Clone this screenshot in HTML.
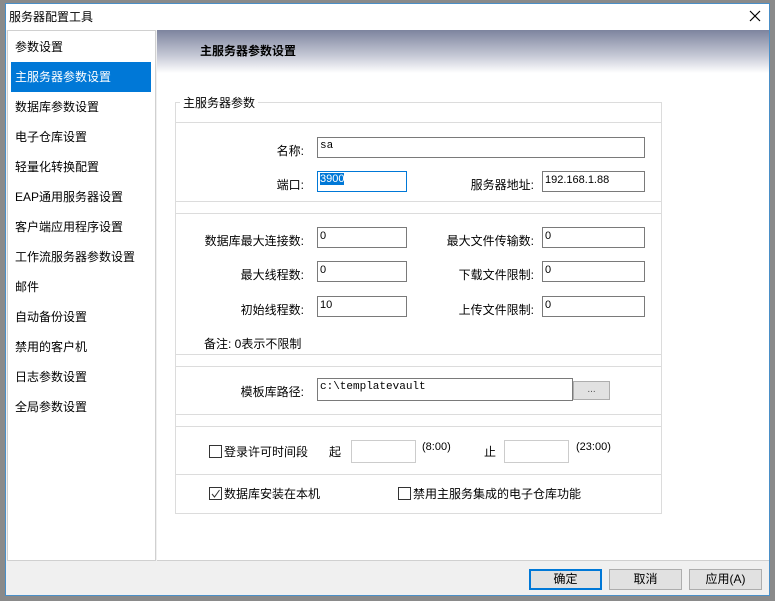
<!DOCTYPE html>
<html><head><meta charset="utf-8"><style>
*{margin:0;padding:0;box-sizing:border-box}
body{width:775px;height:601px;background:#8a8a8a;position:relative;overflow:hidden;font-family:"Liberation Sans","Microsoft YaHei","Noto Sans CJK SC",sans-serif;font-size:12px;color:#000}
.a{position:absolute}
.win{left:5px;top:3px;width:765px;height:593px;background:#f0f0f0;border:1px solid #4a8fc7}
.inp{position:absolute;background:#fff;border:1px solid #7a7a7a;height:22px;font-family:"Liberation Mono",monospace;font-size:11px;padding:2px 2px}
.lbl{position:absolute;text-align:right;font-size:12px}
.hl{position:absolute;height:1px;background:#dcdcdc}
.btn{position:absolute;height:21px;background:#e1e1e1;border:1px solid #adadad;text-align:center;line-height:19px;font-size:12px}
.cb{display:inline-block;width:13px;height:13px;border:1px solid #333;background:#fff;vertical-align:-2px;margin-right:2px;position:relative}
.li{position:absolute;left:15px;font-size:12px}
</style></head><body>
<div class="a win"></div>
<div class="a" style="left:6px;top:4px;width:763px;height:26px;background:#fff"></div>
<div class="a" style="left:9px;top:8px;font-size:12px">服务器配置工具</div>
<svg class="a" style="left:749px;top:10px" width="12" height="12"><path d="M1 1L11 11M11 1L1 11" stroke="#000" stroke-width="1.2"/></svg>
<div class="a" style="left:7px;top:30px;width:149px;height:531px;background:#fff;border:1px solid #d0d0d0"></div>
<div class="a" style="left:11px;top:62px;width:140px;height:30px;background:#0078d7"></div>
<div class="li" style="top:38px">参数设置</div>
<div class="li" style="top:68px;color:#fff">主服务器参数设置</div>
<div class="li" style="top:98px">数据库参数设置</div>
<div class="li" style="top:128px">电子仓库设置</div>
<div class="li" style="top:158px">轻量化转换配置</div>
<div class="li" style="top:188px">EAP通用服务器设置</div>
<div class="li" style="top:218px">客户端应用程序设置</div>
<div class="li" style="top:248px">工作流服务器参数设置</div>
<div class="li" style="top:278px">邮件</div>
<div class="li" style="top:308px">自动备份设置</div>
<div class="li" style="top:338px">禁用的客户机</div>
<div class="li" style="top:368px">日志参数设置</div>
<div class="li" style="top:398px">全局参数设置</div>
<div class="a" style="left:157px;top:30px;width:612px;height:531px;background:#fff;border-bottom:1px solid #d0d0d0"></div>
<div class="a" style="left:157px;top:30px;width:612px;height:43px;background:linear-gradient(#7d849e,#c6c9d6 60%,#fff)"></div>
<div class="a" style="left:200px;top:42px;font-weight:bold;font-size:12px">主服务器参数设置</div>
<div class="a" style="left:175px;top:102px;width:487px;height:412px;border:1px solid #dcdcdc"></div>
<div class="a" style="left:180px;top:94px;background:#fff;padding:0 3px">主服务器参数</div>
<div class="hl" style="left:176px;top:122px;width:485px"></div>
<div class="hl" style="left:176px;top:201px;width:485px"></div>
<div class="hl" style="left:176px;top:213px;width:485px"></div>
<div class="hl" style="left:176px;top:354px;width:485px"></div>
<div class="hl" style="left:176px;top:366px;width:485px"></div>
<div class="hl" style="left:176px;top:414px;width:485px"></div>
<div class="hl" style="left:176px;top:426px;width:485px"></div>
<div class="hl" style="left:176px;top:474px;width:485px"></div>
<div class="lbl" style="left:200px;width:104px;top:142px">名称:</div>
<div class="inp" style="left:317px;top:137px;width:328px;height:21px">sa</div>
<div class="lbl" style="left:200px;width:104px;top:176px">端口:</div>
<div class="inp" style="left:317px;top:171px;width:90px;height:21px;border-color:#0078d7;font-family:'Liberation Sans';padding:1px 2px"><span style="background:#0078d7;color:#fff">3900</span></div>
<div class="lbl" style="left:420px;width:114px;top:176px">服务器地址:</div>
<div class="inp" style="left:542px;top:171px;width:103px;height:21px;font-family:'Liberation Sans'">192.168.1.88</div>
<div class="lbl" style="left:190px;width:114px;top:232px">数据库最大连接数:</div>
<div class="inp" style="left:317px;top:227px;width:90px;height:21px;font-family:'Liberation Sans'">0</div>
<div class="lbl" style="left:410px;width:124px;top:232px">最大文件传输数:</div>
<div class="inp" style="left:542px;top:227px;width:103px;height:21px;font-family:'Liberation Sans'">0</div>
<div class="lbl" style="left:200px;width:104px;top:266px">最大线程数:</div>
<div class="inp" style="left:317px;top:261px;width:90px;height:21px;font-family:'Liberation Sans'">0</div>
<div class="lbl" style="left:420px;width:114px;top:266px">下载文件限制:</div>
<div class="inp" style="left:542px;top:261px;width:103px;height:21px;font-family:'Liberation Sans'">0</div>
<div class="lbl" style="left:200px;width:104px;top:301px">初始线程数:</div>
<div class="inp" style="left:317px;top:296px;width:90px;height:21px;font-family:'Liberation Sans'">10</div>
<div class="lbl" style="left:420px;width:114px;top:301px">上传文件限制:</div>
<div class="inp" style="left:542px;top:296px;width:103px;height:21px;font-family:'Liberation Sans'">0</div>
<div class="a" style="left:204px;top:335px">备注: 0表示不限制</div>
<div class="lbl" style="left:200px;width:104px;top:383px">模板库路径:</div>
<div class="inp" style="left:317px;top:378px;width:256px;height:23px">c:\templatevault</div>
<div class="btn" style="left:573px;top:381px;width:37px;height:19px;line-height:15px;font-size:10px;color:#555">...</div>
<div class="a" style="left:209px;top:443px"><span class="cb"></span>登录许可时间段</div>
<div class="a" style="left:329px;top:443px">起</div>
<div class="a" style="left:351px;top:440px;width:65px;height:23px;border:1px solid #ccc;background:#fff"></div>
<div class="a" style="left:422px;top:441px;font-size:11px">(8:00)</div>
<div class="a" style="left:484px;top:443px">止</div>
<div class="a" style="left:504px;top:440px;width:65px;height:23px;border:1px solid #ccc;background:#fff"></div>
<div class="a" style="left:576px;top:441px;font-size:11px">(23:00)</div>
<div class="a" style="left:209px;top:485px"><span class="cb"><svg class="a" style="left:0;top:0" width="11" height="11"><path d="M2 6L4.5 9L9.5 2" stroke="#333" fill="none" stroke-width="1"/></svg></span>数据库安装在本机</div>
<div class="a" style="left:398px;top:485px"><span class="cb"></span>禁用主服务集成的电子仓库功能</div>
<div class="btn" style="left:529px;top:569px;width:73px;border:2px solid #0078d7;line-height:17px">确定</div>
<div class="btn" style="left:609px;top:569px;width:73px">取消</div>
<div class="btn" style="left:689px;top:569px;width:73px">应用(A)</div>
</body></html>
